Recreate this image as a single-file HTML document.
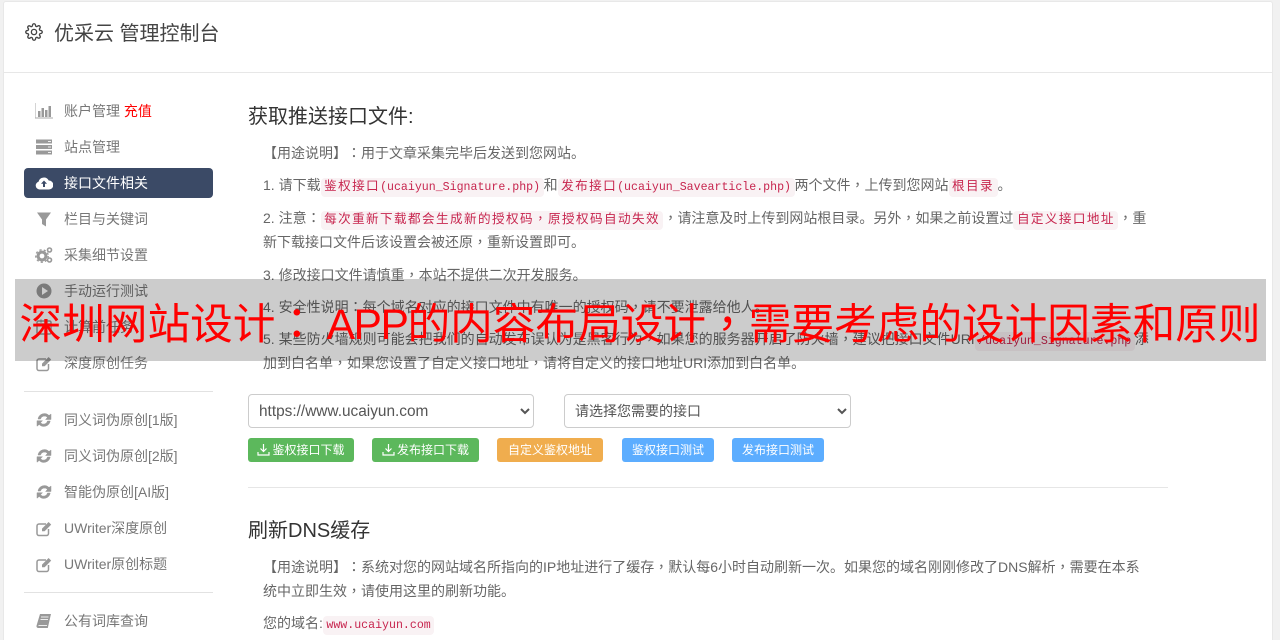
<!DOCTYPE html>
<html>
<head>
<meta charset="utf-8">
<title>优采云 管理控制台</title>
<style>
html,body{margin:0;padding:0;width:1280px;height:640px;overflow:hidden;background:#f1f1f1;}
body{font-family:"Liberation Sans","Noto Sans CJK SC",sans-serif;font-size:14px;color:#666;position:relative;text-spacing-trim:space-all;}
.card{position:absolute;left:3px;top:1px;width:1270px;height:639px;background:#fff;border:1px solid #e8e8e8;border-bottom:0;box-sizing:border-box;border-radius:3px 3px 0 0;}
.hdr{position:absolute;left:4px;top:72px;width:1268px;height:1px;background:#e7e7e7;}
.t{position:absolute;white-space:nowrap;line-height:24px;height:24px;}
.title{left:54px;top:20px;font-size:20px;line-height:28px;height:28px;color:#444;}
.nav{left:64px;color:#777;}
.nav.on{color:#fff;}
.active{position:absolute;left:24px;top:168px;width:189px;height:30px;background:#3b4a66;border-radius:4px;}
.div{position:absolute;left:24px;width:189px;height:1px;background:#e2e2e2;}
.ic{position:absolute;width:18px;height:18px;left:35px;}
h3{position:absolute;left:248px;margin:0;font-size:20px;font-weight:400;line-height:28px;color:#333;white-space:nowrap;}
.p{left:263px;}
i{font-style:normal;font-family:"Noto Sans CJK TC",sans-serif;}
code{font-family:"Liberation Mono","Noto Sans CJK SC",monospace;font-size:11.6px;color:#c7254e;background:#f9f2f4;padding:3px 3.5px;border-radius:4px;}
code b{font-weight:400;font-family:"Noto Sans CJK SC",sans-serif;font-size:12.6px;letter-spacing:1.4px;}
code b i{font-family:"Noto Sans CJK TC",sans-serif;}
select{position:absolute;top:394px;height:34px;background:#fff;border:1px solid #ccc;border-radius:4px;font-family:"Liberation Sans","Noto Sans CJK SC",sans-serif;font-size:15.4px;color:#555;padding:0 6px;margin:0;box-sizing:border-box;}
.b{position:absolute;top:438px;height:24px;line-height:24px;color:#fff;font-size:12px;text-align:center;border-radius:3px;box-sizing:border-box;white-space:nowrap;}
.g{background:#5cb85c;}.o{background:#f0ad4e;}.l{background:#5cadff;}
.b svg{vertical-align:-2px;margin-right:2px;}
.hr{position:absolute;left:248px;top:487px;width:920px;height:1px;background:#e6e6e6;}
.ov{position:absolute;left:15px;top:279px;width:1251px;height:82px;overflow:hidden;background:rgba(0,0,0,.2);color:#f00;font-size:42.67px;line-height:86px;padding-left:4.5px;box-sizing:border-box;white-space:nowrap;}
.ov span{margin-left:8.5px;letter-spacing:-1.5px;}
</style>
</head>
<body>
<svg width="0" height="0" style="position:absolute">
<defs>
<g id="edit"><path d="M13.5 10v4.5a2 2 0 0 1-2 2H4a2 2 0 0 1-2-2V7a2 2 0 0 1 2-2h7" fill="none" stroke="#999" stroke-width="1.5"/><path d="M7 12.2V9.6L13.6 3l2.6 2.600L9.600 12.200z" fill="#999"/></g>
<g id="ref"><path d="M3 8a6.500 6.500 0 0 1 11-3.500L16 3v5.500h-5.500l2-2A4 4 0 0 0 5.500 8z" fill="#999" stroke="#999" stroke-width=".5"/><path d="M15.200 10a6.500 6.500 0 0 1-11 3.500L2 15.200V9.700h5.500l-2 2a4 4 0 0 0 7-1.700z" fill="#999" stroke="#999" stroke-width=".5"/></g>
</defs>
</svg>

<div class="card"></div>
<div class="hdr"></div>

<svg style="position:absolute;left:25px;top:23px" width="18" height="18" viewBox="0 0 24 24" fill="none" stroke="#444" stroke-width="1.800"><circle cx="12" cy="12" r="3.500"/><path d="M19.400 15a1.650 1.650 0 0 0 .33 1.820l.06.06a2 2 0 0 1 0 2.830 2 2 0 0 1-2.830 0l-.06-.06a1.650 1.650 0 0 0-1.820-.33 1.650 1.650 0 0 0-1 1.510V21a2 2 0 0 1-2 2 2 2 0 0 1-2-2v-.09A1.650 1.650 0 0 0 9 19.400a1.650 1.650 0 0 0-1.820.33l-.06.06a2 2 0 0 1-2.830 0 2 2 0 0 1 0-2.830l.06-.06a1.650 1.650 0 0 0 .33-1.820 1.650 1.650 0 0 0-1.510-1H3a2 2 0 0 1-2-2 2 2 0 0 1 2-2h.09A1.650 1.650 0 0 0 4.600 9a1.650 1.650 0 0 0-.33-1.820l-.06-.06a2 2 0 0 1 0-2.830 2 2 0 0 1 2.830 0l.06.06a1.650 1.650 0 0 0 1.820.33H9a1.650 1.650 0 0 0 1-1.510V3a2 2 0 0 1 2-2 2 2 0 0 1 2 2v.09a1.650 1.650 0 0 0 1 1.510 1.650 1.650 0 0 0 1.820-.33l.06-.06a2 2 0 0 1 2.830 0 2 2 0 0 1 0 2.830l-.06.06a1.650 1.650 0 0 0-.33 1.820V9a1.650 1.650 0 0 0 1.510 1H21a2 2 0 0 1 2 2 2 2 0 0 1-2 2h-.09a1.650 1.650 0 0 0-1.510 1z"/></svg>
<div class="t title">优采云 管理控制台</div>

<div class="active"></div>

<svg class="ic" style="top:102px" viewBox="0 0 18 18"><path d="M0 1v15h18" fill="none" stroke="#aaa" stroke-width="1"/><path d="M3 9h2.500v6H3zM6.500 6H9v9H6.500zM10 8h2.500v7H10zM13.500 4H16v11h-2.500z" fill="#999"/></svg>
<svg class="ic" style="top:138px" viewBox="0 0 18 18"><path d="M1 1.500h16v4H1zM1 7h16v4H1zM1 12.500h16v4H1z" fill="#999"/><path d="M13 3h3v1h-3zM13 8.500h3v1h-3zM13 14h3v1h-3z" fill="#eee"/></svg>
<svg class="ic" style="top:174px" viewBox="0 0 18 18"><path d="M4.500 15.500a4 4 0 0 1-1-7.800 5.500 5.500 0 0 1 10.200-1.200 4.500 4.500 0 0 1 .3 9z" fill="#fff"/><path d="M9 6.500l3 3.200h-2v3.300H8V9.700H6z" fill="#3b4a66"/></svg>
<svg class="ic" style="top:210px" viewBox="0 0 18 18"><path d="M2 2.500h14L11 9.500v7l-4-2.500V9.500z" fill="#999"/></svg>
<svg class="ic" style="top:246px" viewBox="0 0 18 18"><circle cx="7" cy="10" r="3.900" fill="none" stroke="#999" stroke-width="3"/><circle cx="7" cy="10" r="6.200" fill="none" stroke="#999" stroke-width="1.400" stroke-dasharray="2.200 2.200"/><circle cx="14.500" cy="4" r="2" fill="none" stroke="#999" stroke-width="1.600"/><circle cx="14.500" cy="14" r="2" fill="none" stroke="#999" stroke-width="1.600"/></svg>
<svg class="ic" style="top:282px" viewBox="0 0 18 18"><circle cx="9" cy="9" r="7.500" fill="#999"/><path d="M7 5l6 4-6 4z" fill="#fff"/></svg>
<svg class="ic" style="top:318px" viewBox="0 0 18 18"><rect x="2" y="3" width="14" height="13" rx="1.500" fill="none" stroke="#999" stroke-width="1.500"/><path d="M2 6h14M6 1.500v3M12 1.500v3" stroke="#999" stroke-width="1.500"/></svg>
<svg class="ic" style="top:354px" viewBox="0 0 18 18"><use href="#edit"/></svg>
<svg class="ic" style="top:411px" viewBox="0 0 18 18"><use href="#ref"/></svg>
<svg class="ic" style="top:447px" viewBox="0 0 18 18"><use href="#ref"/></svg>
<svg class="ic" style="top:483px" viewBox="0 0 18 18"><use href="#ref"/></svg>
<svg class="ic" style="top:519px" viewBox="0 0 18 18"><use href="#edit"/></svg>
<svg class="ic" style="top:555px" viewBox="0 0 18 18"><use href="#edit"/></svg>
<svg class="ic" style="top:612px" viewBox="0 0 18 18"><path d="M5 2h11l-.5 2-2.700 12H3a1.800 1.800 0 0 1-1.500-2.200z" fill="#999"/><path d="M6 5h7.500M5.500 7.500H13M3.500 13.500H12" stroke="#eee" stroke-width=".9"/></svg>

<div class="t nav" style="top:99px">账户管理 <span style="color:#f00">充值</span></div>
<div class="t nav" style="top:135px">站点管理</div>
<div class="t nav on" style="top:171px">接口文件相关</div>
<div class="t nav" style="top:207px">栏目与关键词</div>
<div class="t nav" style="top:243px">采集细节设置</div>
<div class="t nav" style="top:279px">手动运行测试</div>
<div class="t nav" style="top:315px">计算前任务</div>
<div class="t nav" style="top:351px">深度原创任务</div>
<div class="div" style="top:391px"></div>
<div class="t nav" style="top:408px">同义词伪原创[1版]</div>
<div class="t nav" style="top:444px">同义词伪原创[2版]</div>
<div class="t nav" style="top:480px">智能伪原创[AI版]</div>
<div class="t nav" style="top:516px">UWriter深度原创</div>
<div class="t nav" style="top:552px">UWriter原创标题</div>
<div class="div" style="top:592px"></div>
<div class="t nav" style="top:609px">公有词库查询</div>

<h3 style="top:103px">获取推送接口文件:</h3>
<div class="t p" style="top:141px">【用途说明】<i>：</i>用于文章采集完毕后发送到您网站。</div>
<div class="t p" style="top:173px">1. 请下载<code><b>鉴权接口</b>(ucaiyun_Signature.php)</code>和<code><b>发布接口</b>(ucaiyun_Savearticle.php)</code>两个文件<i>，</i>上传到您网站<code><b>根目录</b></code>。</div>
<div class="t p" style="top:206px">2. 注意<i>：</i><code><b>每次重新下载都会生成新的授权码<i>，</i>原授权码自动失效</b></code><i>，</i>请注意及时上传到网站根目录。另外<i>，</i>如果之前设置过<code><b>自定义接口地址</b></code><i>，</i>重</div>
<div class="t p" style="top:230px">新下载接口文件后该设置会被还原<i>，</i>重新设置即可。</div>
<div class="t p" style="top:263px">3. 修改接口文件请慎重<i>，</i>本站不提供二次开发服务。</div>
<div class="t p" style="top:295px">4. 安全性说明<i>：</i>每个域名对应的接口文件中有唯一的授权码<i>，</i>请不要泄露给他人。</div>
<div class="t p" style="top:327px">5. 某些防火墙规则可能会把我们的自动发布误认为是黑客行为<i>，</i>如果您的服务器开启了防火墙<i>，</i>建议把接口文件URI<code>/ucaiyun_Signature.php</code>添</div>
<div class="t p" style="top:351px">加到白名单<i>，</i>如果您设置了自定义接口地址<i>，</i>请将自定义的接口地址URI添加到白名单。</div>

<select style="left:248px;width:286px"><option>https://www.ucaiyun.com</option></select>
<select style="left:564px;width:287px;font-size:14px"><option>请选择您需要的接口</option></select>

<div class="b g" style="left:248px;width:106px"><svg width="13" height="13" viewBox="0 0 13 13" fill="none" stroke="#fff" stroke-width="1.200"><path d="M6.500 1v7M3.500 5.500l3 3 3-3M1 9v3h11V9"/></svg>鉴权接口下载</div>
<div class="b g" style="left:372px;width:107px"><svg width="13" height="13" viewBox="0 0 13 13" fill="none" stroke="#fff" stroke-width="1.200"><path d="M6.500 1v7M3.500 5.500l3 3 3-3M1 9v3h11V9"/></svg>发布接口下载</div>
<div class="b o" style="left:497px;width:106px">自定义鉴权地址</div>
<div class="b l" style="left:622px;width:92px">鉴权接口测试</div>
<div class="b l" style="left:732px;width:92px">发布接口测试</div>

<div class="hr"></div>

<h3 style="top:517px">刷新DNS缓存</h3>
<div class="t p" style="top:555px">【用途说明】<i>：</i>系统对您的网站域名所指向的IP地址进行了缓存<i>，</i>默认每6小时自动刷新一次。如果您的域名刚刚修改了DNS解析<i>，</i>需要在本系</div>
<div class="t p" style="top:579px">统中立即生效<i>，</i>请使用这里的刷新功能。</div>
<div class="t p" style="top:611px">您的域名:<code>www.ucaiyun.com</code></div>

<div class="ov">深圳网站设计<i>：</i><span>APP</span>的内容布局设计<i>，</i>需要考虑的设计因素和原则</div>
</body>
</html>
